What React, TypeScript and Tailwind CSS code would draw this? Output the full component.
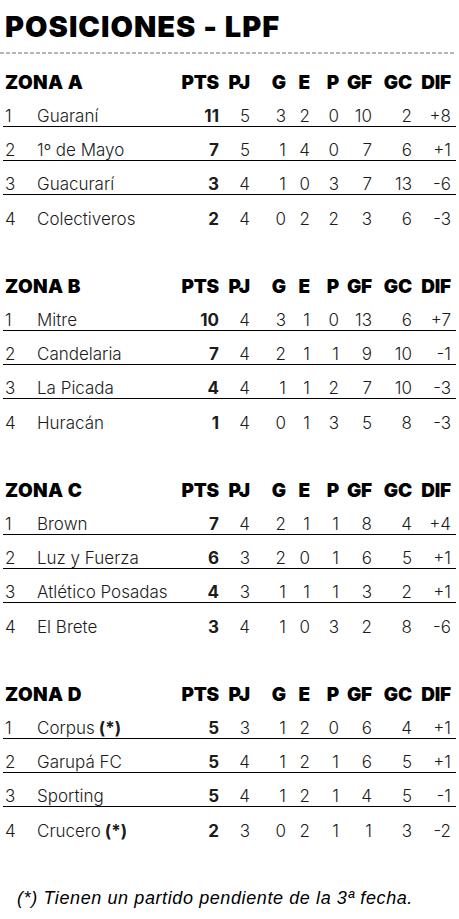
type Row = {
  pos: number;
  team: string;
  mark?: boolean;
  pts: number;
  pj: number;
  g: number;
  e: number;
  p: number;
  gf: number;
  gc: number;
  dif: string;
};

type Zone = { name: string; rows: Row[] };

const zones: Zone[] = [
  {
    name: "ZONA A",
    rows: [
      { pos: 1, team: "Guaraní", pts: 11, pj: 5, g: 3, e: 2, p: 0, gf: 10, gc: 2, dif: "+8" },
      { pos: 2, team: "1º de Mayo", pts: 7, pj: 5, g: 1, e: 4, p: 0, gf: 7, gc: 6, dif: "+1" },
      { pos: 3, team: "Guacurarí", pts: 3, pj: 4, g: 1, e: 0, p: 3, gf: 7, gc: 13, dif: "-6" },
      { pos: 4, team: "Colectiveros", pts: 2, pj: 4, g: 0, e: 2, p: 2, gf: 3, gc: 6, dif: "-3" },
    ],
  },
  {
    name: "ZONA B",
    rows: [
      { pos: 1, team: "Mitre", pts: 10, pj: 4, g: 3, e: 1, p: 0, gf: 13, gc: 6, dif: "+7" },
      { pos: 2, team: "Candelaria", pts: 7, pj: 4, g: 2, e: 1, p: 1, gf: 9, gc: 10, dif: "-1" },
      { pos: 3, team: "La Picada", pts: 4, pj: 4, g: 1, e: 1, p: 2, gf: 7, gc: 10, dif: "-3" },
      { pos: 4, team: "Huracán", pts: 1, pj: 4, g: 0, e: 1, p: 3, gf: 5, gc: 8, dif: "-3" },
    ],
  },
  {
    name: "ZONA C",
    rows: [
      { pos: 1, team: "Brown", pts: 7, pj: 4, g: 2, e: 1, p: 1, gf: 8, gc: 4, dif: "+4" },
      { pos: 2, team: "Luz y Fuerza", pts: 6, pj: 3, g: 2, e: 0, p: 1, gf: 6, gc: 5, dif: "+1" },
      { pos: 3, team: "Atlético Posadas", pts: 4, pj: 3, g: 1, e: 1, p: 1, gf: 3, gc: 2, dif: "+1" },
      { pos: 4, team: "El Brete", pts: 3, pj: 4, g: 1, e: 0, p: 3, gf: 2, gc: 8, dif: "-6" },
    ],
  },
  {
    name: "ZONA D",
    rows: [
      { pos: 1, team: "Corpus", mark: true, pts: 5, pj: 3, g: 1, e: 2, p: 0, gf: 6, gc: 4, dif: "+1" },
      { pos: 2, team: "Garupá FC", pts: 5, pj: 4, g: 1, e: 2, p: 1, gf: 6, gc: 5, dif: "+1" },
      { pos: 3, team: "Sporting", pts: 5, pj: 4, g: 1, e: 2, p: 1, gf: 4, gc: 5, dif: "-1" },
      { pos: 4, team: "Crucero", mark: true, pts: 2, pj: 3, g: 0, e: 2, p: 1, gf: 1, gc: 3, dif: "-2" },
    ],
  },
];

// right-aligned stat columns, widths tuned to the printed table
const cols = ["w-[40px]", "w-[31px]", "w-[36px]", "w-[24px]", "w-[29px]", "w-[33px]", "w-[40px]", "w-[39px]"];
const heads = ["PTS", "PJ", "G", "E", "P", "GF", "GC", "DIF"];

function ZoneTable({ zone }: { zone: Zone }) {
  return (
    <div className="mx-[3px] mb-[34px]">
      <div className="flex h-[34px] items-end pl-[2px] pr-[5px] font-['Inter',sans-serif] text-[19px] font-black leading-[20px] tracking-[-0.01em] text-black">
        <div className="flex-1 tracking-[0.02em]">{zone.name}</div>
        {heads.map((h, i) => (
          <div key={h} className={`${cols[i]} text-right`}>
            {h}
          </div>
        ))}
      </div>
      {zone.rows.map((r, idx) => {
        const vals = [r.pj, r.g, r.e, r.p, r.gf, r.gc, r.dif];
        return (
          <div
            key={r.pos}
            className={`flex h-[34px] items-end pb-[1px] pl-[2px] pr-[5px] text-[17px] leading-[18px] text-[#1c1c1c] font-light ${
              idx < 3 ? "border-b-[1.5px] border-black" : ""
            }`}
          >
            <div className="w-[32px]">{r.pos}</div>
            <div className="flex-1 whitespace-nowrap">
              {r.team}
              {r.mark && <span className="font-bold"> (*)</span>}
            </div>
            <div className={`${cols[0]} text-right font-bold`}>{r.pts}</div>
            {vals.map((v, i) => (
              <div key={i} className={`${cols[i + 1]} text-right`}>
                {v}
              </div>
            ))}
          </div>
        );
      })}
    </div>
  );
}

export default function App() {
  return (
    <div className="w-[459px] h-[919px] bg-white overflow-hidden font-['Inter',sans-serif]">
      <h1 className="pl-[5px] pt-[11px] font-['Inter',sans-serif] text-[29px] font-black leading-[32px] tracking-[0.035em] text-black">
        POSICIONES - LPF
      </h1>
      <div className="mt-[9px] h-[2px] w-[455px] bg-[repeating-linear-gradient(90deg,#b5b5b5_0_4px,transparent_4px_6px)]" />
      <div className="mt-[5px]">
        {zones.map((z) => (
          <ZoneTable key={z.name} zone={z} />
        ))}
      </div>
      <p className="mt-[45px] pl-[17px] font-['Liberation_Sans',sans-serif] text-[18px] italic leading-[24px] tracking-[0.6px] text-black">
        (*) Tienen un partido pendiente de la 3ª fecha.
      </p>
    </div>
  );
}
